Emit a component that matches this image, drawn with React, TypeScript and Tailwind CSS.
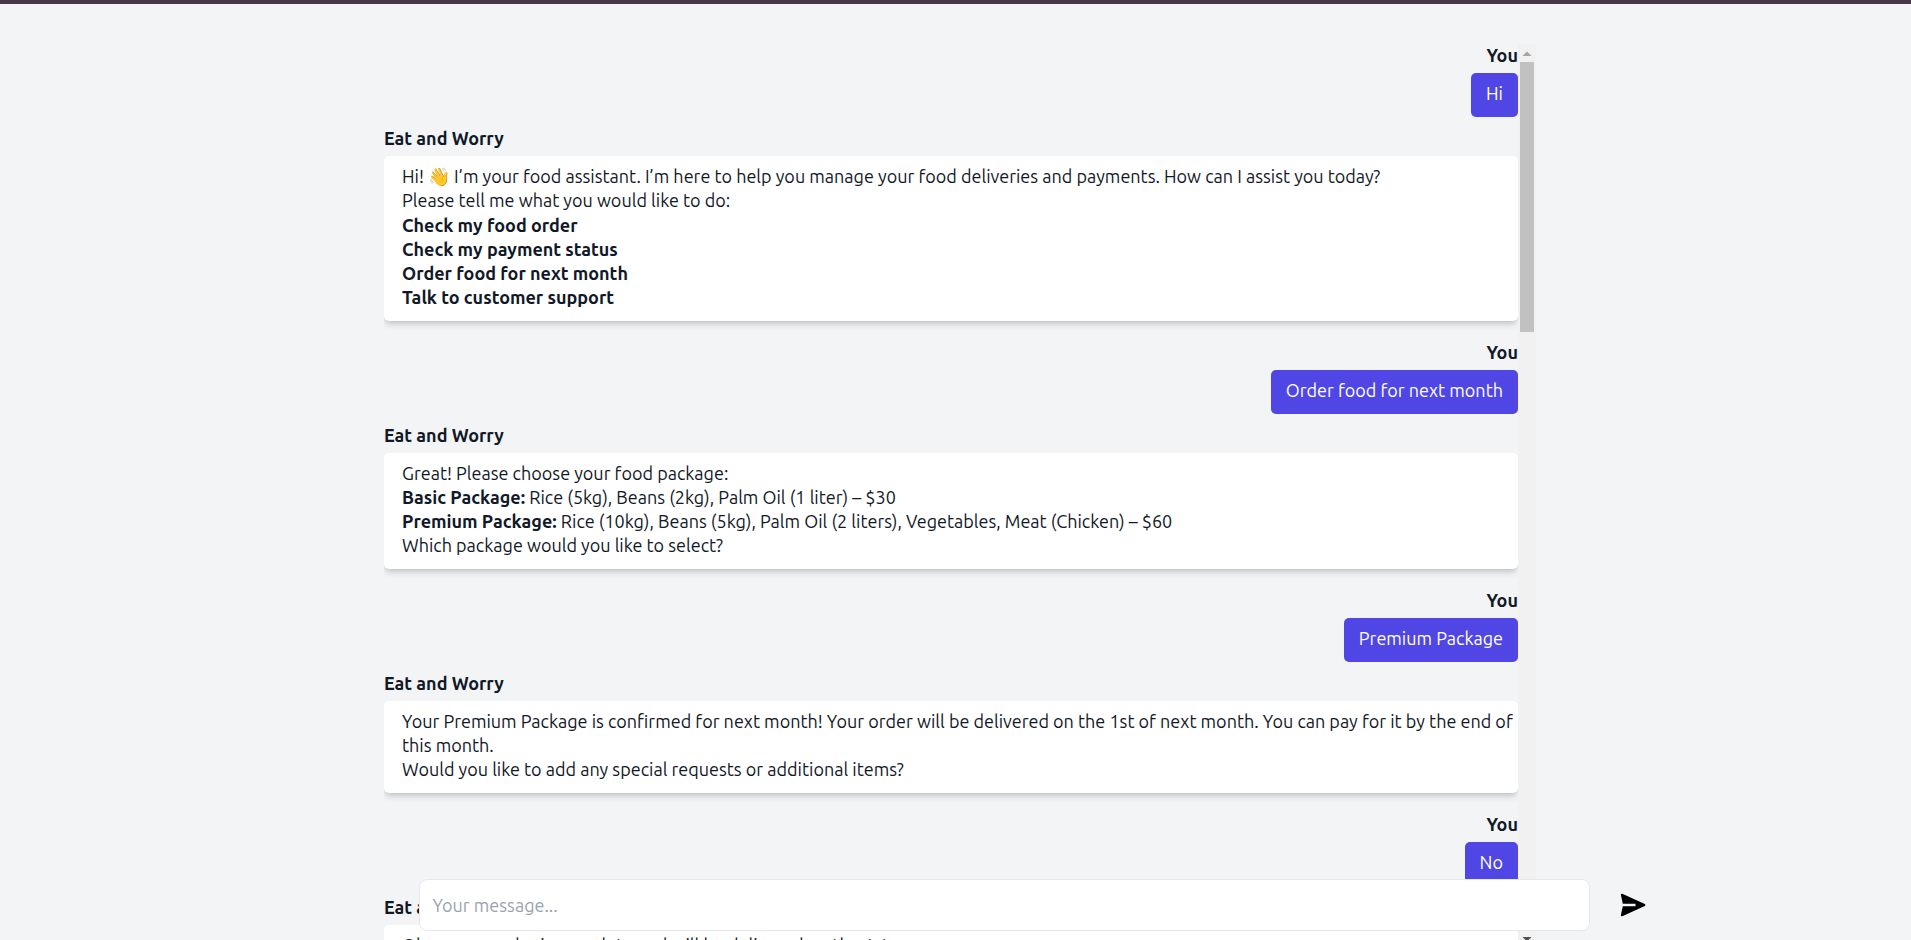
import type { ReactNode } from "react";

type Message = { id: number; from: "user" | "bot"; content: ReactNode };

const messages: Message[] = [
  { id: 1, from: "user", content: "Hi" },
  {
    id: 2,
    from: "bot",
    content: (
      <>
        <p>
          Hi! 👋 I’m your food assistant. I’m here to help you manage your food deliveries and
          payments. How can I assist you today?
        </p>
        <p>Please tell me what you would like to do:</p>
        <ul className="pt-px font-bold">
          <li>Check my food order</li>
          <li>Check my payment status</li>
          <li>Order food for next month</li>
          <li>Talk to customer support</li>
        </ul>
      </>
    ),
  },
  { id: 3, from: "user", content: "Order food for next month" },
  {
    id: 4,
    from: "bot",
    content: (
      <>
        <p>Great! Please choose your food package:</p>
        <p>
          <strong>Basic Package:</strong> Rice (5kg), Beans (2kg), Palm Oil (1 liter) – $30
        </p>
        <p>
          <strong>Premium Package:</strong> Rice (10kg), Beans (5kg), Palm Oil (2 liters),
          Vegetables, Meat (Chicken) – $60
        </p>
        <p>Which package would you like to select?</p>
      </>
    ),
  },
  { id: 5, from: "user", content: "Premium Package" },
  {
    id: 6,
    from: "bot",
    content: (
      <>
        <p>
          Your Premium Package is confirmed for next month! Your order will be delivered on the 1st
          of next month. You can pay for it by the end of this month.
        </p>
        <p>Would you like to add any special requests or additional items?</p>
      </>
    ),
  },
  { id: 7, from: "user", content: "No" },
  {
    id: 8,
    from: "bot",
    content: <p>Okay, your order is complete and will be delivered on the 1st.</p>,
  },
];

function UserMessage({ children }: { children: ReactNode }) {
  return (
    <div className="flex flex-col items-end pb-[9px]">
      <h2 className="font-bold">You</h2>
      <div className="mt-[6px] rounded-[5px] bg-[#4f46e5] px-[15px] pt-2 pb-3 text-white">
        {children}
      </div>
    </div>
  );
}

function BotMessage({ children }: { children: ReactNode }) {
  return (
    <div className="pb-[19px]">
      <h2 className="font-bold">Eat and Worry</h2>
      <div className="mt-[6px] rounded-[5px] bg-white pt-2 pr-1 pb-3 pl-[18px] shadow-[0_5px_7px_-1px_rgba(0,0,0,0.12),0_3px_5px_-2px_rgba(0,0,0,0.12)]">
        {children}
      </div>
    </div>
  );
}

function ScrollTrack() {
  return (
    <div
      aria-hidden="true"
      className="mt-px flex w-[18px] shrink-0 flex-col items-center bg-[#f1f1f1]"
    >
      <svg viewBox="0 0 18 18" className="h-[18px] w-[18px] shrink-0" fill="#a3a3a3">
        <path d="M9 7.5l4.5 4.5h-9z" />
      </svg>
      <div className="h-[270px] w-[14px] shrink-0 bg-[#c1c1c1]" />
      <div className="grow" />
      <svg viewBox="0 0 18 18" className="h-[18px] w-[18px] shrink-0" fill="#505050">
        <path d="M9 10.5L4.5 6h9z" />
      </svg>
    </div>
  );
}

export default function App() {
  return (
    <div className="h-screen overflow-hidden border-t-4 border-[#46374a] bg-[#f3f4f6] pt-[39px] pl-[9px] font-['Ubuntu','Open_Sans',sans-serif] text-[18px] leading-6 text-[#111827]">
      <main className="mx-auto flex h-[calc(100vh-34px)] max-w-6xl">
        <div className="min-w-0 grow overflow-hidden">
          {messages.map((m) =>
            m.from === "user" ? (
              <UserMessage key={m.id}>{m.content}</UserMessage>
            ) : (
              <BotMessage key={m.id}>{m.content}</BotMessage>
            ),
          )}
        </div>
        <ScrollTrack />
      </main>

      <form
        onSubmit={(e) => e.preventDefault()}
        className="fixed bottom-[9px] left-[22%] -ml-px flex w-[65%] items-center gap-[30px]"
      >
        <input
          type="text"
          aria-label="Your message"
          placeholder="Your message..."
          className="h-[52px] min-w-0 grow rounded-lg border border-gray-200 bg-white px-3 placeholder:text-[#9ca3af] focus:outline-none"
        />
        <button type="submit" aria-label="Send message" className="shrink-0 pr-4 text-black">
          <svg viewBox="0 0 26 24" className="h-6 w-[26px]" fill="currentColor">
            <path d="M2.3.8 24.8 11.1a1 1 0 0 1 0 1.8L2.3 23.2A1 1 0 0 1 .9 22L2.8 13.2H15.5V10.8H2.8L.9 2A1 1 0 0 1 2.3.8z" />
          </svg>
        </button>
      </form>
    </div>
  );
}
